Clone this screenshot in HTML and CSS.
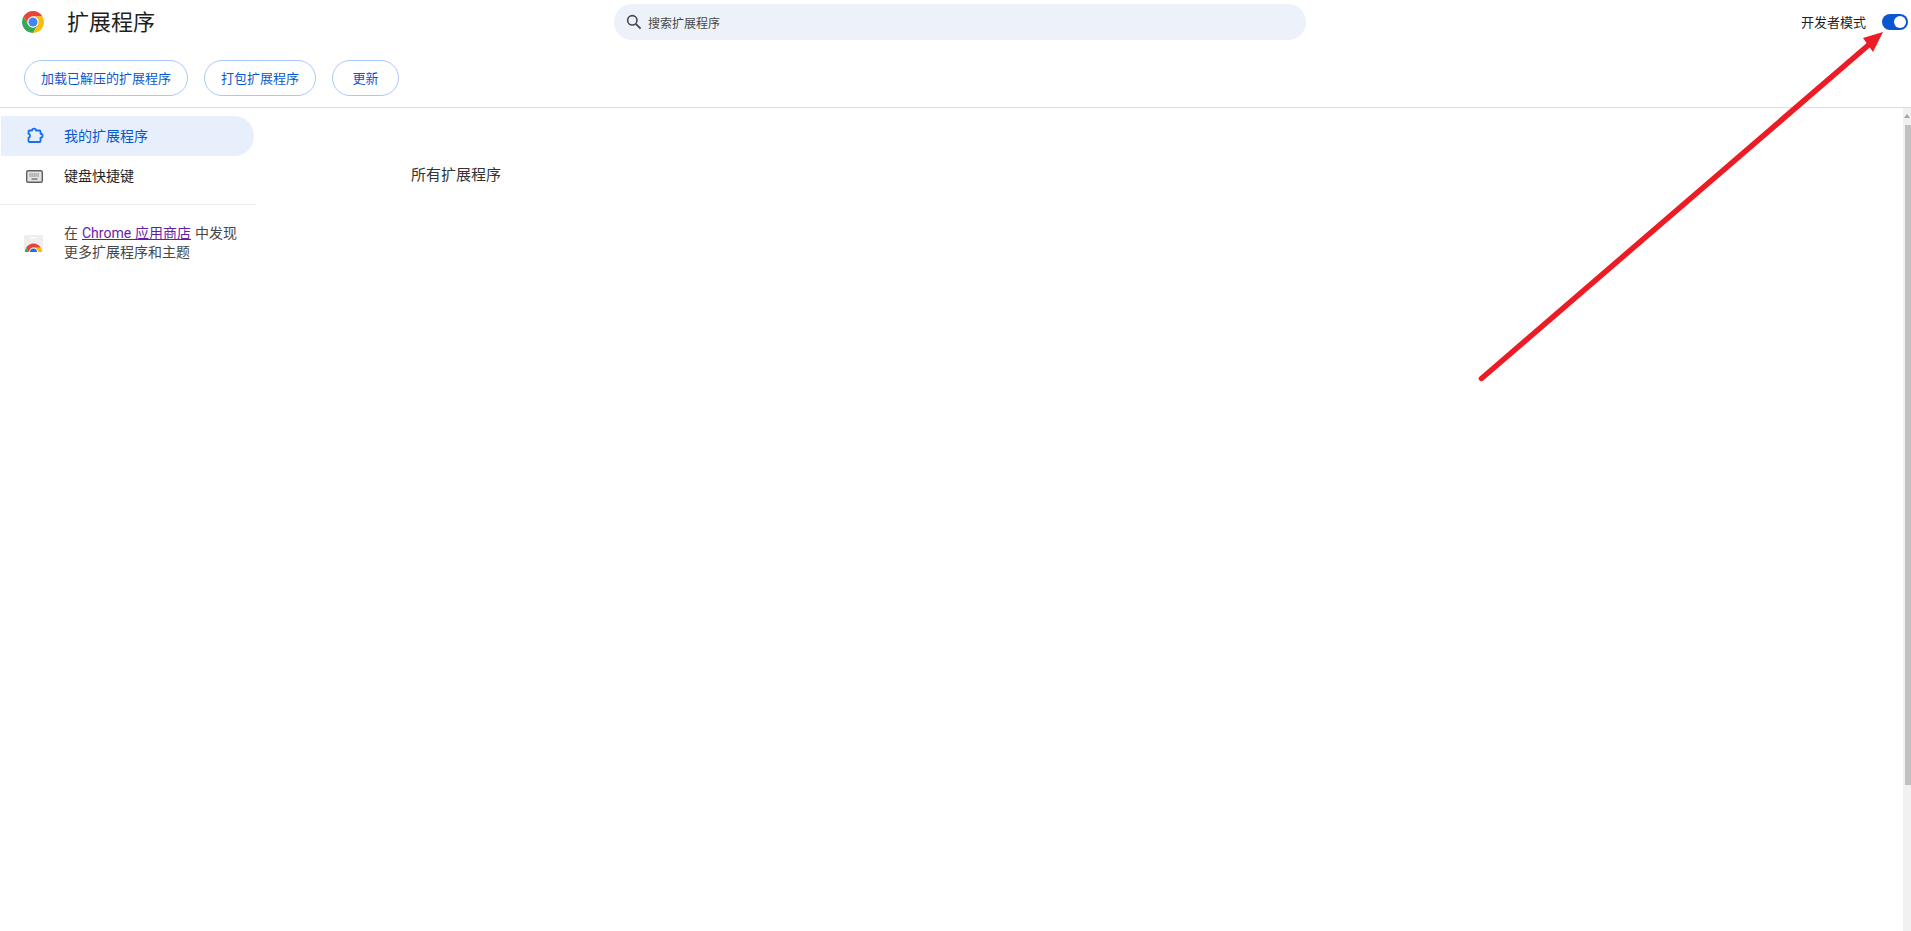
FILE: index.html
```html
<!DOCTYPE html>
<html lang="zh-CN">
<head>
<meta charset="utf-8">
<title>扩展程序</title>
<link rel="stylesheet" href="styles.css">
</head>
<body>
<header class="header">
  <div class="top-row">
    <div class="brand">
      <svg class="logo" viewBox="4 4 40 40">
        <path fill="#ea4335" d="M6.68 14A20 20 0 0 1 41.32 14H24L15.34 29z"/>
        <path fill="#34a853" d="M24 44A20 20 0 0 1 6.68 14L15.34 29H32.66z"/>
        <path fill="#fbbc04" d="M41.32 14A20 20 0 0 1 24 44L32.66 29 24 14z"/>
        <circle cx="24" cy="24" r="10.400" fill="#fff"/>
        <circle cx="24" cy="24" r="8.300" fill="#4285f4"/>
      </svg>
      <h1 class="title">扩展程序</h1>
    </div>
    <div class="search">
      <svg class="search-icon" viewBox="0 0 16 16"><circle cx="6.3" cy="6.3" r="4.7" fill="none" stroke="#474747" stroke-width="1.6"/><path d="M9.8 9.8 14.6 14.6" stroke="#474747" stroke-width="1.8" fill="none"/></svg>
      <span class="search-text">搜索扩展程序</span>
    </div>
    <div class="dev">
      <span class="dev-label">开发者模式</span>
      <span class="toggle"><span class="knob"></span></span>
    </div>
  </div>
  <div class="actions">
    <button class="btn"><span class="btn-text">加载已解压的扩展程序</span></button>
    <button class="btn"><span class="btn-text">打包扩展程序</span></button>
    <button class="btn btn-update"><span class="btn-text">更新</span></button>
  </div>
</header>
<div class="main">
  <nav class="sidebar">
    <a class="nav-item active">
      <svg class="nav-icon" viewBox="0 0 20 20"><path d="M4.500 4.500H7c0-2.600 4-2.600 4 0h3.500a1 1 0 0 1 1 1v2.250c2.800 0 2.800 4 0 4v3.250a1 1 0 0 1-1 1h-10a1 1 0 0 1-1-1v-3.250c2 0 2-4 0-4v-2.250a1 1 0 0 1 1-1z" fill="none" stroke="#1a6ef0" stroke-width="1.800" stroke-linejoin="round"/></svg>
      <span class="nav-text">我的扩展程序</span>
    </a>
    <a class="nav-item">
      <svg class="nav-icon" viewBox="0 0 20 20"><rect x="1.700" y="4.700" width="15.600" height="11.600" rx="1.500" fill="#e4e4e4" stroke="#5f5f5f" stroke-width="1.400"/><path d="M4.500 8h10M4.500 10h10" stroke="#5f5f5f" stroke-width="1.100" stroke-dasharray="1.200 .8"/><path d="M6.500 13h6" stroke="#5f5f5f" stroke-width="1.200"/></svg>
      <span class="nav-text">键盘快捷键</span>
    </a>
    <div class="divider"></div>
    <div class="store">
      <svg class="store-icon" viewBox="0 0 19 17">
        <rect width="19" height="17" fill="#eeeeee"/>
        <rect x="6.500" y="2" width="6" height="1.300" fill="#fff"/>
        <g transform="translate(9.5 17) scale(.425) translate(-24 -24)">
          <path fill="#ea4335" d="M6.68 14A20 20 0 0 1 41.32 14H24L15.34 29z"/>
          <path fill="#34a853" d="M24 44A20 20 0 0 1 6.68 14L15.34 29H32.66z"/>
          <path fill="#fbbc04" d="M41.32 14A20 20 0 0 1 24 44L32.66 29 24 14z"/>
          <circle cx="24" cy="24" r="10.400" fill="#fff"/>
          <circle cx="24" cy="24" r="8.300" fill="#1a73e8"/>
        </g>
      </svg>
      <p class="store-text">在 <a class="store-link">Chrome 应用商店</a> 中发现<br>更多扩展程序和主题</p>
    </div>
  </nav>
  <main class="content">
    <h2 class="section-title">所有扩展程序</h2>
  </main>
  <aside class="scrollbar">
    <span class="scroll-up"></span>
    <span class="scroll-thumb"></span>
  </aside>
</div>
<svg class="arrow" viewBox="0 0 1911 931">
  <path d="M1481.500 378.500 1872 42" stroke="#ed1c24" stroke-width="5.500" stroke-linecap="round" fill="none"/>
  <path d="M1883 32 1863 38 1873 52z" fill="#ed1c24"/>
</svg>
</body>
</html>
```

FILE: styles.css
```css
* { box-sizing: border-box; }
html, body { height: 100%; }
body {
  margin: 0;
  height: 931px;
  overflow: hidden;
  display: flex;
  flex-direction: column;
  background: #fff;
  color: #1f1f1f;
  font-family: Roboto, "Noto Sans CJK SC", sans-serif;
  position: relative;
}
.header {
  height: 108px;
  flex: none;
  border-bottom: 1px solid #dcdcdc;
}
.top-row {
  display: flex;
  align-items: center;
  height: 44px;
}
.brand {
  display: flex;
  align-items: center;
  width: 614px;
  padding-left: 22px;
}
.logo { width: 22px; height: 22px; flex: none; }
.title {
  margin: 2px 0 0 23px;
  font-size: 22px;
  font-weight: 400;
  line-height: 44px;
  color: #1f1f1f;
}
.search {
  width: 692px;
  height: 36px;
  border-radius: 18px;
  background: #edf2fa;
  display: flex;
  align-items: center;
  padding-left: 12px;
  gap: 6px;
}
.search-icon { width: 16px; height: 16px; flex: none; }
.search-text { font-size: 12px; color: #474747; }
.dev {
  margin-left: auto;
  display: flex;
  align-items: center;
  gap: 16px;
  padding-right: 3px;
}
.dev-label { font-size: 13px; color: #1f1f1f; padding-bottom: 2px; }
.toggle {
  width: 26px;
  height: 16px;
  border-radius: 8px;
  background: #0b57d0;
  display: flex;
  align-items: center;
  justify-content: flex-end;
  padding-right: 2px;
}
.knob { width: 12px; height: 12px; border-radius: 50%; background: #fff; }
.actions {
  display: flex;
  gap: 16px;
  padding: 16px 0 0 24px;
}
.btn {
  height: 36px;
  padding: 0 16px;
  background: #fff;
  border: 1px solid #a8c7fa;
  border-radius: 18px;
  color: #0b57d0;
  font: inherit;
  font-size: 13px;
}
.btn-text { display: block; padding-bottom: 2px; }
.btn-update { width: 67px; padding: 0; }
.main { flex: 1; display: flex; min-height: 0; }
.sidebar { width: 256px; flex: none; padding-top: 8px; }
.nav-item {
  display: flex;
  align-items: center;
  gap: 19px;
  height: 40px;
  padding-left: 25px;
  font-size: 14px;
  color: #1f1f1f;
}
.nav-item.active {
  margin-left: 1px;
  width: 253px;
  padding-left: 24px;
  background: #e7effd;
  border-radius: 0 20px 20px 0;
  color: #0b57d0;
}
.nav-icon { width: 20px; height: 20px; flex: none; }
.nav-text { padding-bottom: 2px; }
.divider { height: 1px; background: #eeeeee; margin-top: 8px; }
.store {
  display: flex;
  align-items: center;
  gap: 21px;
  padding: 19px 0 0 24px;
}
.store-icon { width: 19px; height: 17px; flex: none; }
.store-text {
  margin: 0;
  font-size: 14px;
  line-height: 19px;
  color: #474747;
  white-space: nowrap;
  word-spacing: .5px;
}
.store-link { color: #681da8; text-decoration: underline; }
.content { flex: 1; padding: 55px 0 0 155px; }
.section-title {
  margin: 0;
  font-size: 15px;
  font-weight: 400;
  line-height: 24px;
  color: #333333;
}
.scrollbar {
  width: 8px;
  flex: none;
  background: #f1f1f1;
  display: flex;
  flex-direction: column;
  align-items: flex-end;
}
.scroll-up {
  margin: 6px 1px 6px 0;
  width: 0;
  height: 0;
  border-left: 3px solid transparent;
  border-right: 3px solid transparent;
  border-bottom: 4px solid #a3a3a3;
}
.scroll-thumb { width: 6px; height: 660px; background: #c1c1c1; margin-top: 1px; }
.arrow {
  position: absolute;
  left: 0;
  top: 0;
  width: 1911px;
  height: 931px;
  pointer-events: none;
}
```
